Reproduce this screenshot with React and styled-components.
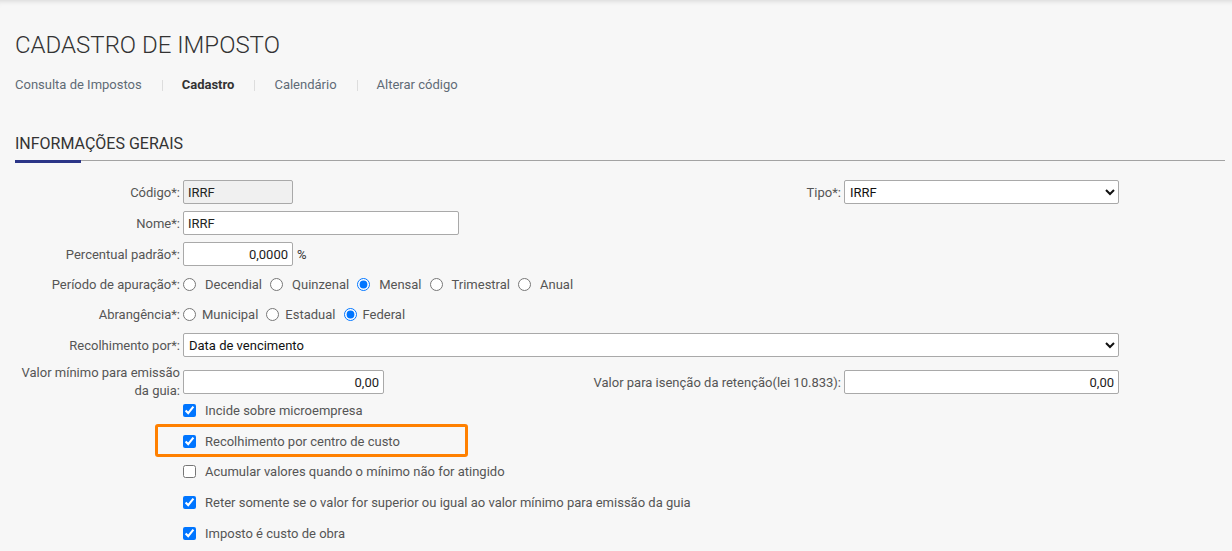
import styled, { createGlobalStyle } from 'styled-components'

const GlobalStyle = createGlobalStyle`
    body {
        margin: 0;
        background: #f7f7f7;
        font-family: Roboto, "Liberation Sans", Arial, sans-serif;
        font-size: 13px;
        color: #555;
    }
`

const Page = styled.div`
    min-height: 551px;
    padding: 0 0 0 15px;
    box-shadow: inset 0 6px 6px -6px rgba(0, 0, 0, 0.18);
    overflow: hidden;
`
const Title = styled.h1`
    margin: 0;
    padding-top: 31px;
    font-size: 24px;
    font-weight: 300;
    line-height: 28px;
    color: #333;
`
const Tabs = styled.nav`
    display: flex;
    align-items: center;
    margin-top: 18px;
    height: 16px;
`
const Tab = styled.a`
    color: ${p => (p.$active ? '#333' : '#5f6b76')};
    font-weight: ${p => (p.$active ? 700 : 400)};
    text-decoration: none;
    line-height: 16px;
`
const Sep = styled.span`
    width: 1px;
    height: 11px;
    background: #ddd;
    margin: 0 19px 0 20px;
`
const SectionTitle = styled.h2`
    margin: 41px 0 0;
    font-size: 16px;
    font-weight: 400;
    color: #333;
    line-height: 20px;
`
const Rule = styled.div`
    position: relative;
    height: 3px;
    margin: 6px 7px 0 0;
    &::before {
        content: '';
        display: block;
        height: 1px;
        background: #a3a3a3;
    }
    &::after {
        content: '';
        position: absolute;
        left: 0;
        top: 0;
        width: 66px;
        height: 3px;
        background: #2b3587;
    }
`
const Form = styled.div`
    display: grid;
    grid-template-columns: 168px 384px 277px 275px;
    row-gap: 7px;
    margin-top: 17px;
    margin-left: -15px;
    padding-left: 15px;
`
const Label = styled.label`
    grid-column: ${p => p.$col || 1};
    text-align: right;
    padding-right: 3px;
    line-height: ${p => p.$lh || 15}px;
    min-height: ${p => p.$h || 24}px;
    display: flex;
    align-items: center;
    justify-content: flex-end;
    color: #555;
`
const Field = styled.div`
    grid-column: ${p => p.$span || 'auto'};
    display: flex;
    align-items: center;
    gap: 4px;
    min-height: ${p => p.$h || 24}px;
`
const TextInput = styled.input`
    box-sizing: border-box;
    width: ${p => p.$w || 110}px;
    height: 24px;
    border: 1px solid #a9a9a9;
    border-radius: 2px;
    padding: 0 4px;
    font: 13px Roboto, "Liberation Sans", Arial, sans-serif;
    color: #222;
    text-align: ${p => (p.$right ? 'right' : 'left')};
    background: ${p => (p.disabled ? '#f0f0f0' : '#fff')};
    &:disabled {
        color: #222;
    }
`
const Select = styled.select`
    box-sizing: border-box;
    width: 100%;
    height: 24px;
    border: 1px solid #a9a9a9;
    border-radius: 2px;
    padding: 0 1px;
    font: 13px Roboto, "Liberation Sans", Arial, sans-serif;
    color: #111;
    background: #fff;
`
const Unit = styled.span`
    color: #333;
`
const RadioGroup = styled.div`
    grid-column: 2 / 5;
    display: flex;
    align-items: center;
    height: 23px;
`
const RadioOption = styled.label`
    display: flex;
    align-items: center;
    gap: ${p => p.$gap || 6}px;
    margin-right: ${p => p.$space || 8}px;
    color: #555;
    input {
        margin: 0;
        width: 13px;
        height: 13px;
    }
`
const Checks = styled.div`
    grid-column: 2 / 5;
    margin-top: -12px;
`
const CheckRow = styled.label`
    position: relative;
    display: flex;
    align-items: center;
    gap: 9px;
    height: 30.8px;
    color: #555;
    input {
        margin: 0;
        width: 13px;
        height: 13px;
    }
`
const Highlight = styled.span`
    position: absolute;
    left: -28px;
    top: -2px;
    width: 313px;
    height: 33px;
    box-sizing: border-box;
    border: 3px solid #ff8000;
    border-radius: 3px;
    pointer-events: none;
`

const periodos = ['Decendial', 'Quinzenal', 'Mensal', 'Trimestral', 'Anual']
const abrangencias = ['Municipal', 'Estadual', 'Federal']
const checks = [
    { text: 'Incide sobre microempresa', checked: true },
    { text: 'Recolhimento por centro de custo', checked: true, highlight: true },
    { text: 'Acumular valores quando o mínimo não for atingido', checked: false },
    { text: 'Reter somente se o valor for superior ou igual ao valor mínimo para emissão da guia', checked: true },
    { text: 'Imposto é custo de obra', checked: true },
]

const App = () => {
    return (
        <Page>
            <GlobalStyle />
            <Title>CADASTRO DE IMPOSTO</Title>
            <Tabs>
                <Tab href="#">Consulta de Impostos</Tab>
                <Sep />
                <Tab href="#" $active>Cadastro</Tab>
                <Sep />
                <Tab href="#">Calendário</Tab>
                <Sep />
                <Tab href="#">Alterar código</Tab>
            </Tabs>
            <SectionTitle>INFORMAÇÕES GERAIS</SectionTitle>
            <Rule />

            <Form>
                <Label>Código*:</Label>
                <Field>
                    <TextInput disabled defaultValue="IRRF" $w={110} />
                </Field>
                <Label $col={3}>Tipo*:</Label>
                <Field>
                    <Select defaultValue="IRRF">
                        <option>IRRF</option>
                    </Select>
                </Field>

                <Label>Nome*:</Label>
                <Field $span="2 / 5">
                    <TextInput defaultValue="IRRF" $w={276} />
                </Field>

                <Label>Percentual padrão*:</Label>
                <Field $span="2 / 5">
                    <TextInput defaultValue="0,0000" $w={110} $right />
                    <Unit>%</Unit>
                </Field>

                <Label $h={23}>Período de apuração*:</Label>
                <RadioGroup>
                    {periodos.map(p => (
                        <RadioOption key={p} $gap={9} $space={8}>
                            <input type="radio" name="periodo" defaultChecked={p === 'Mensal'} />
                            {p}
                        </RadioOption>
                    ))}
                </RadioGroup>

                <Label $h={23}>Abrangência*:</Label>
                <RadioGroup>
                    {abrangencias.map(a => (
                        <RadioOption key={a} $gap={6} $space={8}>
                            <input type="radio" name="abrangencia" defaultChecked={a === 'Federal'} />
                            {a}
                        </RadioOption>
                    ))}
                </RadioGroup>

                <Label>Recolhimento por*:</Label>
                <Field $span="2 / 5">
                    <Select defaultValue="Data de vencimento">
                        <option>Data de vencimento</option>
                    </Select>
                </Field>

                <Label $h={34} $lh={18}>Valor mínimo para emissão da guia:</Label>
                <Field>
                    <TextInput defaultValue="0,00" $w={201} $right />
                </Field>
                <Label $col={3}>Valor para isenção da retenção(lei 10.833):</Label>
                <Field>
                    <TextInput defaultValue="0,00" $w={275} $right />
                </Field>

                <Checks>
                    {checks.map(c => (
                        <CheckRow key={c.text}>
                            <input type="checkbox" defaultChecked={c.checked} />
                            {c.text}
                            {c.highlight && <Highlight />}
                        </CheckRow>
                    ))}
                </Checks>
            </Form>
        </Page>
    )
}

export default App
